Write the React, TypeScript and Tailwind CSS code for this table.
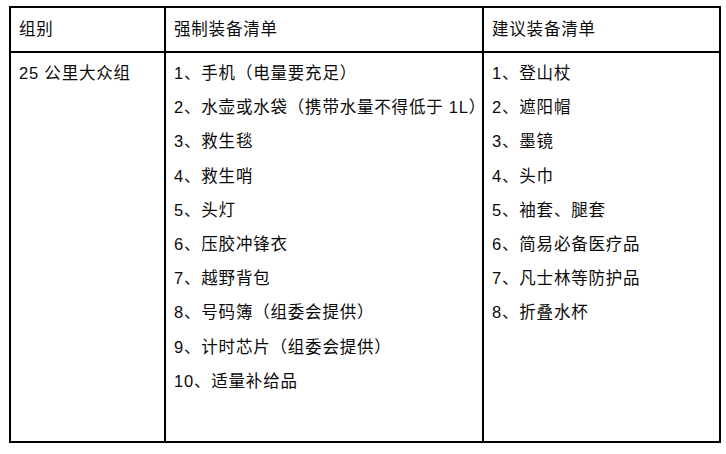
import React from "react";

const required = [
  "1、手机（电量要充足）",
  "2、水壶或水袋（携带水量不得低于 1L）",
  "3、救生毯",
  "4、救生哨",
  "5、头灯",
  "6、压胶冲锋衣",
  "7、越野背包",
  "8、号码簿（组委会提供）",
  "9、计时芯片（组委会提供）",
  "10、适量补给品",
];

const suggested = [
  "1、登山杖",
  "2、遮阳帽",
  "3、墨镜",
  "4、头巾",
  "5、袖套、腿套",
  "6、简易必备医疗品",
  "7、凡士林等防护品",
  "8、折叠水杯",
];

export default function App() {
  return (
    <div
      className="w-[726px] h-[454px] bg-white text-[16.5px] tracking-[0.8px] text-[#0a0a0a]"
      style={{ fontFamily: '"Liberation Sans", "Noto Sans CJK SC", sans-serif' }}
    >
      <div className="pl-[9px] pt-[6px]">
        <div className="grid grid-cols-[155px_318px_235px] grid-rows-[45px_388px] w-[712px] border-2 border-black">
          <div className="border-r-2 border-b-2 border-black flex items-center pl-[8px]">组别</div>
          <div className="border-r-2 border-b-2 border-black flex items-center pl-[8px]">强制装备清单</div>
          <div className="border-b-2 border-black flex items-center pl-[8px]">建议装备清单</div>
          <div className="border-r-2 border-black pl-[8px] pt-[3px] leading-[34.2px] whitespace-nowrap">25 公里大众组</div>
          <div className="border-r-2 border-black pl-[8px] pt-[3px] leading-[34.2px] flex flex-col whitespace-nowrap">
            {required.map((t) => (
              <div key={t}>{t}</div>
            ))}
          </div>
          <div className="pl-[8px] pt-[3px] leading-[34.2px] flex flex-col whitespace-nowrap">
            {suggested.map((t) => (
              <div key={t}>{t}</div>
            ))}
          </div>
        </div>
      </div>
    </div>
  );
}
